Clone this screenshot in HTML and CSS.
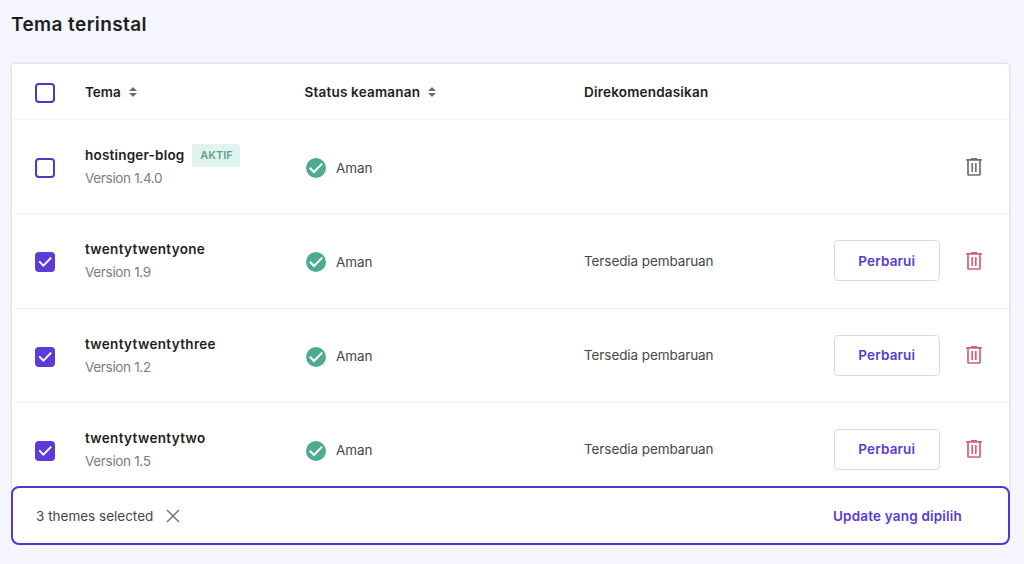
FILE: index.html
```html
<!DOCTYPE html>
<html lang="id">
<head>
<meta charset="utf-8">
<title>Tema terinstal</title>
<link rel="stylesheet" href="styles.css">
</head>
<body>
<svg width="0" height="0" class="sprite">
  <symbol id="sort" viewBox="0 0 8 10"><path d="M4 0 8 4H0zM4 10 0 6h8z"/></symbol>
  <symbol id="tick" viewBox="0 0 20 20"><path d="m4.2 9.4 4.2 4.2 7.8-8" fill="none" stroke="#fff" stroke-width="2"/></symbol>
  <symbol id="safe" viewBox="0 0 20 20"><circle cx="10" cy="10" r="10"/><path d="m3.8 9.8 4.2 4.2 8.2-8.4" fill="none" stroke="#fff" stroke-width="2"/></symbol>
  <symbol id="trash" viewBox="0 0 16 18"><path d="M.2 1.9h15.6M5 .9h6M2 2v14.3q0 .7.7.7h10.6q.7 0 .7-.7V2M6.2 5v9M9.8 5v9" fill="none" stroke="currentColor" stroke-width="1.7" stroke-linejoin="round"/></symbol>
</svg>
<main class="page">
  <h1 class="title">Tema terinstal</h1>
  <section class="table">
    <div class="row head">
      <span class="check"></span>
      <span class="label">Tema<svg class="sort"><use href="#sort"/></svg></span>
      <span class="label"><span class="wide">Status keamanan</span><svg class="sort"><use href="#sort"/></svg></span>
      <span class="label"><span class="wide">Direkomendasikan</span></span>
    </div>
    <div class="row">
      <span class="check"></span>
      <div class="theme"><div class="name"><span class="wide">hostinger-blog</span><span class="badge">AKTIF</span></div><div class="version">Version 1.4.0</div></div>
      <div class="status"><svg class="safe"><use href="#safe"/></svg><span>Aman</span></div>
      <span></span>
      <span></span>
      <svg class="trash"><use href="#trash"/></svg>
    </div>
    <div class="row">
      <span class="check on"><svg><use href="#tick"/></svg></span>
      <div class="theme"><div class="name"><span class="wider">twentytwentyone</span></div><div class="version">Version 1.9</div></div>
      <div class="status"><svg class="safe"><use href="#safe"/></svg><span>Aman</span></div>
      <span class="update">Tersedia pembaruan</span>
      <button class="button">Perbarui</button>
      <svg class="trash red"><use href="#trash"/></svg>
    </div>
    <div class="row">
      <span class="check on"><svg><use href="#tick"/></svg></span>
      <div class="theme"><div class="name"><span class="wider">twentytwentythree</span></div><div class="version">Version 1.2</div></div>
      <div class="status"><svg class="safe"><use href="#safe"/></svg><span>Aman</span></div>
      <span class="update">Tersedia pembaruan</span>
      <button class="button">Perbarui</button>
      <svg class="trash red"><use href="#trash"/></svg>
    </div>
    <div class="row">
      <span class="check on"><svg><use href="#tick"/></svg></span>
      <div class="theme"><div class="name"><span class="wider">twentytwentytwo</span></div><div class="version">Version 1.5</div></div>
      <div class="status"><svg class="safe"><use href="#safe"/></svg><span>Aman</span></div>
      <span class="update">Tersedia pembaruan</span>
      <button class="button">Perbarui</button>
      <svg class="trash red"><use href="#trash"/></svg>
    </div>
  </section>
  <footer class="bar">
    <span class="selected">3 themes selected</span>
    <svg class="close" viewBox="0 0 14 14"><path d="m1 1 12 12M13 1 1 13"/></svg>
    <span class="action">Update yang dipilih</span>
  </footer>
</main>
</body>
</html>
```
FILE: styles.css
```css
* { box-sizing: border-box; }
body {
  margin: 0;
  height: 564px;
  overflow: hidden;
  background: #f4f5ff;
  color: #1d1e20;
  font: 14px/20px Inter, "Liberation Sans", sans-serif;
}
.sprite { display: block; }
.page { padding: 11px 14px 0 11px; }
.title { margin: 0 0 24px; font-size: 19px; font-weight: 600; line-height: 28px; letter-spacing: .4px; }
.table {
  height: 432px;
  overflow: hidden;
  background: #fff;
  border: 1px solid #e2e3ea;
  border-radius: 4px;
  box-shadow: 0 0 2px #dcdde6;
}
.row {
  display: grid;
  grid-template-columns: 50px 219.5px 279.5px 250px 132px 16px;
  align-items: center;
  height: 94.25px;
  padding-left: 23px;
  border-bottom: 1px solid #f2f3f6;
}
.head { height: 56px; }
.check {
  width: 20px;
  height: 20px;
  margin-top: 3px;
  border: 2px solid #5235cf;
  border-radius: 4px;
}
.check.on { border: 0; background: #5c3bd8; }
.check svg { display: block; width: 20px; height: 20px; }
.label { display: flex; align-items: center; gap: 8px; font-size: 13.5px; font-weight: 600; }
.wide { letter-spacing: .2px; }
.wider { letter-spacing: .33px; }
.sort { width: 8px; height: 10px; fill: #6d6b80; }
.name { display: flex; align-items: center; gap: 8px; height: 24px; font-size: 13.5px; font-weight: 600; }
.version { height: 23px; line-height: 23px; font-size: 13.5px; color: #7b7c88; letter-spacing: -.33px; }
.badge {
  width: 48px;
  height: 23px;
  border-radius: 3px;
  background: #e0f3ee;
  color: #5ba48b;
  font-size: 11px;
  line-height: 23px;
  text-align: center;
}
.status { display: flex; align-items: center; gap: 10px; padding: 3px 0 0 1.5px; color: #46483f; }
.status span { margin-top: -1px; font-size: 13.5px; letter-spacing: -.1px; }
.safe { width: 20px; height: 20px; fill: #4eab91; }
.update { color: #46483f; font-size: 13.5px; letter-spacing: -.09px; }
.button {
  width: 105.5px;
  height: 41px;
  padding: 0;
  border: 1px solid #d9dae3;
  border-radius: 4px;
  background: #fff;
  color: #573bd2;
  font: 600 13.5px/20px Inter, "Liberation Sans", sans-serif;
  letter-spacing: .18px;
}
.trash { width: 16px; height: 18px; color: #6d6e7c; }
.trash.red { color: #d55c7e; }
.bar {
  position: relative;
  display: flex;
  align-items: center;
  height: 59px;
  margin-top: -9px;
  padding: 0 46px 0 23px;
  border: 2px solid #5237cf;
  border-radius: 8px;
  background: #fff;
}
.selected { color: #46483f; font-size: 13.5px; }
.close { width: 14px; height: 14px; margin-left: 13px; fill: none; stroke: #6d6e7c; stroke-width: 1.4; }
.action { margin-left: auto; color: #573bd2; font-size: 13.5px; font-weight: 600; letter-spacing: .19px; }
```
